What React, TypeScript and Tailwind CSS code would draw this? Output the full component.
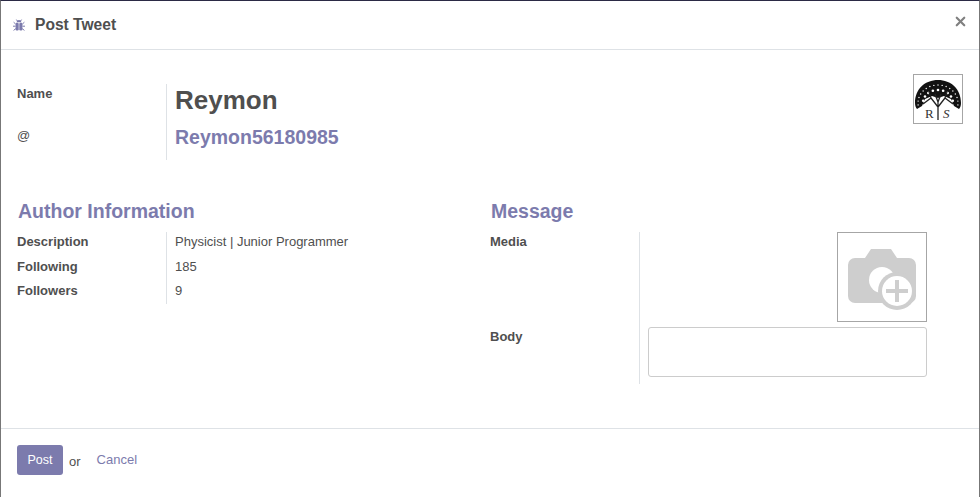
import { X } from 'lucide-react';

const PURPLE = 'text-[#7c7bad]';

// outer and inner rows of white cells in the tree's canopy
const OUTER_CELLS = [-96, -84, -72, -60, -48, -36, -24, -12, 0, 12, 24, 36, 48, 60, 72, 84, 96];
const INNER_CELLS = [-80, -60, -40, -20, 0, 20, 40, 60, 80];

function cellPos(angle: number, rx: number, ry: number) {
  const rad = (angle * Math.PI) / 180;
  return { cx: 24 + rx * Math.sin(rad), cy: 28 - ry * Math.cos(rad) };
}

function BugIcon() {
  return (
    <svg width="12" height="13" viewBox="0 0 12 13" className="text-[#7c7bad]" fill="currentColor">
      <path d="M3.6 3.2a2.4 2.2 0 0 1 4.8 0z" />
      <rect x="2.6" y="3.8" width="3.1" height="7.6" rx="1.2" />
      <rect x="6.3" y="3.8" width="3.1" height="7.6" rx="1.2" />
      <path d="M0.6 3.2l2 1.8M11.4 3.2l-2 1.8M0 7.2h2.6M12 7.2H9.4M0.6 11.4l2.2-1.8M11.4 11.4l-2.2-1.8M3.4 0.6l1 1.4M8.6 0.6l-1 1.4" stroke="currentColor" strokeWidth="1" fill="none" />
    </svg>
  );
}

function TreeLogo() {
  return (
    <svg width="48" height="48" viewBox="0 0 48 48" fill="none">
      <path d="M1 28C1 14 11 5 24 5s23 9 23 23c0 3-1 5-2 6l-5-3-3-7-7-3-6 2-6-2-7 3-3 7-5 3c-1-1-2-3-2-6z" fill="#111" />
      <g fill="#fff">
        {OUTER_CELLS.map((a) => (
          <circle key={a} {...cellPos(a, 20, 18)} r="0.7" />
        ))}
        {INNER_CELLS.map((a) => (
          <circle key={a} {...cellPos(a, 15, 13)} r="1.300" />
        ))}
      </g>
      <path d="M24 45V27M24 32l-7-9M24 32l7-9M24 27l-3-8M24 27l3-8M17 23l-8 6M31 23l8 6M17 23l-2-6M31 23l2-6" stroke="#222" strokeWidth="1.300" />
      <text x="11" y="43" fontSize="13" fontFamily="'Liberation Serif', serif" fill="#333">R</text>
      <text x="29" y="43" fontSize="13" fontFamily="'Liberation Serif', serif" fontStyle="italic" fill="#333">S</text>
    </svg>
  );
}

function CameraPlus() {
  return (
    <svg width="70" height="62" viewBox="0 0 70 62" className="mt-[6px]">
      <path d="M8 9h10l6-9h20l6 9h12a7 7 0 0 1 7 7v31a7 7 0 0 1-7 7H8a7 7 0 0 1-7-7V16a7 7 0 0 1 7-7z" fill="#cecece" />
      <circle cx="35" cy="31" r="13" fill="#fff" />
      <circle cx="50" cy="42" r="19" fill="#cecece" />
      <circle cx="50" cy="42" r="15" fill="#fff" />
      <path d="M50 31v22M39 42h22" stroke="#cecece" strokeWidth="4" />
    </svg>
  );
}

function FieldRow({ label, value, first }: { label: string; value: string; first?: boolean }) {
  return (
    <div className="flex">
      <div className={`w-[149px] h-[24px] font-bold ${first ? '' : 'pt-[1px]'}`}>{label}</div>
      <div className={`border-l border-[#dee2e6] pl-[8px] h-[24px] ${first ? '' : 'pt-[1px]'}`}>{value}</div>
    </div>
  );
}

export default function App() {
  return (
    <div className="w-[980px] h-[497px] overflow-hidden bg-white border-t border-x border-t-[#2b2a45] border-x-[#777777] text-[13px] leading-[20px] text-[#4f4f4f] font-['Liberation_Sans',Arial,sans-serif] flex flex-col">
      <header className="h-[49px] shrink-0 flex items-center justify-between border-b border-[#dee2e6] pl-[12px] pr-[11px]">
        <div className="flex items-center gap-[10px]">
          <BugIcon />
          <h4 className="text-[15.6px] font-bold leading-[24px]">Post Tweet</h4>
        </div>
        <X size={15} strokeWidth={3.500} className="text-[#808080] -mt-[8px]" />
      </header>

      <main className="flex-1 pt-[24px] pl-[16px] pr-[16px]">
        <div className="flex justify-between">
          <div className="flex mt-[10px]">
            <div className="w-[149px] h-[76px] shrink-0">
              <div className="font-bold">Name</div>
              <div className="mt-[22px]">@</div>
            </div>
            <div className="border-l border-[#dee2e6] h-[76px] pl-[8px]">
              <div className="text-[26px] leading-[32px] font-bold">Reymon</div>
              <div className={`text-[19.500px] leading-[26px] font-bold mt-[8px] ${PURPLE}`}>Reymon56180985</div>
            </div>
          </div>
          <div className="w-[50px] h-[50px] border border-[#a6a6a6] shrink-0">
            <TreeLogo />
          </div>
        </div>

        <div className="flex mt-[38px]">
          <section className="w-[473px] shrink-0">
            <h3 className={`text-[19.500px] leading-[26px] font-bold ml-[1px] mb-[8px] ${PURPLE}`}>Author Information</h3>
            <FieldRow first label="Description" value="Physicist | Junior Programmer" />
            <FieldRow label="Following" value="185" />
            <FieldRow label="Followers" value="9" />
          </section>
          <section className="flex-1">
            <h3 className={`text-[19.500px] leading-[26px] font-bold ml-[1px] mb-[8px] ${PURPLE}`}>Message</h3>
            <div className="flex">
              <div className="w-[149px] shrink-0 font-bold">
                <div className="h-[95px]">Media</div>
                <div>Body</div>
              </div>
              <div className="border-l border-[#dee2e6] pl-[8px] w-[288px] h-[152px] flex flex-col items-end">
                <div className="w-[90px] h-[90px] border border-[#a6a6a6] flex items-center justify-center">
                  <CameraPlus />
                </div>
                <div className="w-[279px] h-[50px] mt-[5px] border border-[#cccccc] rounded-[3px]" />
              </div>
            </div>
          </section>
        </div>
      </main>

      <footer className="h-[69px] shrink-0 border-t border-[#dee2e6] pl-[16px] pt-[16px] flex items-start">
        <button className="w-[46px] h-[30px] bg-[#7c7bad] text-white rounded-[3px] text-[12.500px]">Post</button>
        <span className="ml-[6px] mt-[7px]">or</span>
        <span className={`ml-[16px] mt-[5px] ${PURPLE}`}>Cancel</span>
      </footer>
    </div>
  );
}
